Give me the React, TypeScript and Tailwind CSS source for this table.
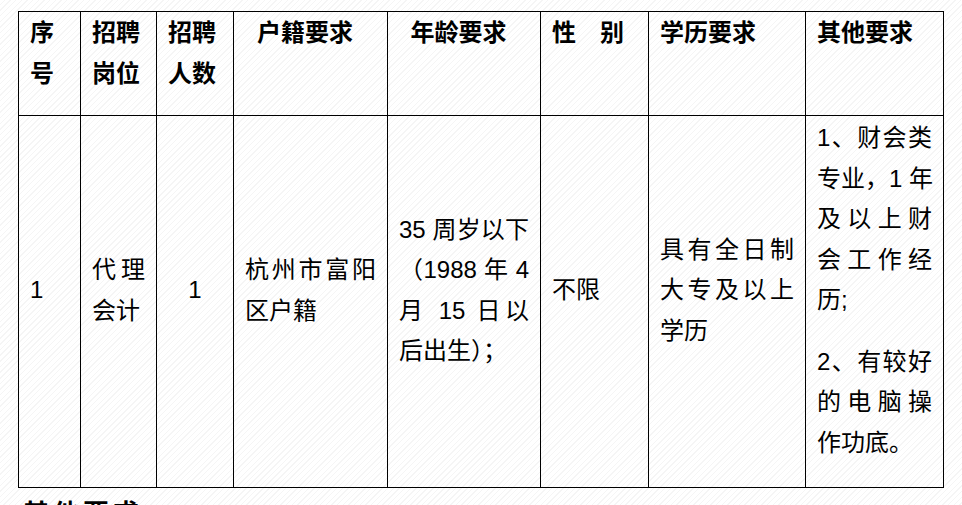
import React from 'react';

// one entry per rendered line; j = stretch the line to the cell width (Word-style distributed text)
type Line = { t: string; j?: boolean };

const HEADERS: { lines: string[]; align: 'left' | 'center' }[] = [
    { lines: ['序', '号'], align: 'left' },
    { lines: ['招聘', '岗位'], align: 'left' },
    { lines: ['招聘', '人数'], align: 'left' },
    { lines: ['户籍要求'], align: 'center' },
    { lines: ['年龄要求'], align: 'center' },
    { lines: ['性　别'], align: 'left' },
    { lines: ['学历要求'], align: 'left' },
    { lines: ['其他要求'], align: 'left' },
];

const COL_WIDTHS = ['w-[62px]', 'w-[76px]', 'w-[77px]', 'w-[154px]', 'w-[153px]', 'w-[108px]', 'w-[157px]', 'w-[138px]'];

const ROW: { paras: Line[][]; center?: boolean }[] = [
    { paras: [[{ t: '1' }]] },
    { paras: [[{ t: '代理', j: true }, { t: '会计' }]] },
    { paras: [[{ t: '1' }]], center: true },
    { paras: [[{ t: '杭州市富阳', j: true }, { t: '区户籍' }]] },
    {
        paras: [[
            { t: '35 周岁以下', j: true },
            { t: '（1988 年 4', j: true },
            { t: '月 15 日以', j: true },
            { t: '后出生）；' },
        ]],
    },
    { paras: [[{ t: '不限' }]] },
    { paras: [[{ t: '具有全日制', j: true }, { t: '大专及以上', j: true }, { t: '学历' }]] },
    {
        paras: [
            [
                { t: '1、财会类', j: true },
                { t: '专业，1 年', j: true },
                { t: '及以上财', j: true },
                { t: '会工作经', j: true },
                { t: '历;' },
            ],
            [
                { t: '2、有较好', j: true },
                { t: '的电脑操', j: true },
                { t: '作功底。' },
            ],
        ],
    },
];

const Para: React.FC<{ lines: Line[] }> = ({ lines }) => (
    <p className="mb-[21px]">
        {lines.map((l, i) => (
            <span
                key={i}
                className={`block whitespace-nowrap ${l.j ? 'text-justify [text-align-last:justify]' : ''}`}
            >
                {l.t}
            </span>
        ))}
    </p>
);

const App: React.FC = () => {
    return (
        <div
            className="min-h-[505px] w-[962px] overflow-hidden bg-[repeating-linear-gradient(135deg,#ffffff_0px,#ffffff_3px,#f5f5f5_3px,#f5f5f5_4px)] pt-[11px] text-black"
            style={{ fontFamily: '"Liberation Sans", "Noto Sans CJK SC", sans-serif' }}
        >
            <table className="ml-[18px] w-[925px] table-fixed border-collapse text-[24px] leading-[40.5px]">
                <colgroup>
                    {COL_WIDTHS.map((w, i) => (
                        <col key={i} className={w} />
                    ))}
                </colgroup>
                <thead>
                    <tr>
                        {HEADERS.map((h, i) => (
                            <th
                                key={i}
                                className={`border border-black pt-[1px] align-top font-bold ${
                                    h.align === 'center' ? 'pl-[11px] pr-[22px] text-center' : 'px-[11px] text-left'
                                }`}
                            >
                                <p className="mb-[21px]">
                                    {h.lines.map((l, k) => (
                                        <span key={k} className="block whitespace-nowrap">{l}</span>
                                    ))}
                                </p>
                            </th>
                        ))}
                    </tr>
                </thead>
                <tbody>
                    <tr>
                        {ROW.map((c, i) => (
                            <td
                                key={i}
                                className={`border border-black px-[11px] pb-[3px] pt-[2px] align-middle font-normal ${
                                    c.center ? 'text-center' : 'text-left'
                                }`}
                            >
                                {c.paras.map((p, k) => (
                                    <Para key={k} lines={p} />
                                ))}
                            </td>
                        ))}
                    </tr>
                </tbody>
            </table>

            <h3 className="ml-[23px] mt-[13px] text-[26px] font-bold leading-[26px] tracking-[4px]">其他要求</h3>
        </div>
    );
};

export default App;
